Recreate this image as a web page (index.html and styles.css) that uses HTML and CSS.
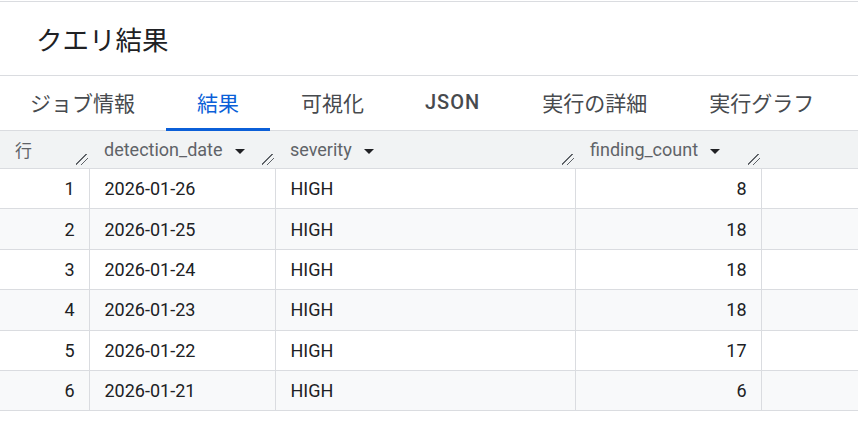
FILE: index.html
```html
<!DOCTYPE html>
<html lang="ja">
<head>
  <meta charset="UTF-8">
  <title>クエリ結果</title>
  <link rel="stylesheet" href="styles.css">
</head>
<body>
  <div class="title-bar">
    <h1 class="title">クエリ結果</h1>
  </div>

  <div class="tabs">
    <div class="tab">ジョブ情報</div>
    <div class="tab active">結果</div>
    <div class="tab">可視化</div>
    <div class="tab latin">JSON</div>
    <div class="tab">実行の詳細</div>
    <div class="tab">実行グラフ</div>
  </div>

  <table class="results">
    <colgroup>
      <col class="c-row">
      <col class="c-date">
      <col class="c-sev">
      <col class="c-count">
      <col>
    </colgroup>
    <thead>
      <tr>
        <th class="row-head">行<span class="handle"></span></th>
        <th><span class="col-name">detection_date</span><span class="drop"></span><span class="handle"></span></th>
        <th><span class="col-name">severity</span><span class="drop"></span><span class="handle"></span></th>
        <th><span class="col-name">finding_count</span><span class="drop"></span><span class="handle"></span></th>
        <th></th>
      </tr>
    </thead>
    <tbody>
      <tr><td class="num">1</td><td>2026-01-26</td><td>HIGH</td><td class="num">8</td><td class="spacer"></td></tr>
      <tr><td class="num">2</td><td>2026-01-25</td><td>HIGH</td><td class="num">18</td><td class="spacer"></td></tr>
      <tr><td class="num">3</td><td>2026-01-24</td><td>HIGH</td><td class="num">18</td><td class="spacer"></td></tr>
      <tr><td class="num">4</td><td>2026-01-23</td><td>HIGH</td><td class="num">18</td><td class="spacer"></td></tr>
      <tr><td class="num">5</td><td>2026-01-22</td><td>HIGH</td><td class="num">17</td><td class="spacer"></td></tr>
      <tr><td class="num">6</td><td>2026-01-21</td><td>HIGH</td><td class="num">6</td><td class="spacer"></td></tr>
    </tbody>
  </table>
</body>
</html>
```

FILE: styles.css
```css
:root {
  --line: #dadce0;
  --head-bg: #f1f3f4;
  --stripe: #f8f9fa;
  --text: #202124;
  --muted: #5f6368;
  --tab-text: #474a4e;
  --blue: #0b5fd8;
}

body {
  margin: 0;
  padding-top: 1px;
  background: #fff;
  color: var(--text);
  font-family: Roboto, "Noto Sans CJK JP", sans-serif;
}

.title-bar {
  border-top: 1px solid var(--line);
  border-bottom: 1px solid var(--line);
  height: 73px;
  display: flex;
  align-items: center;
  padding-left: 36px;
}

.title {
  margin: 0;
  font-size: 26.5px;
  font-weight: 400;
  font-family: "Noto Sans CJK JP", sans-serif;
}

.tabs {
  display: flex;
  height: 54px;
  border-bottom: 1px solid var(--line);
}

.tab {
  display: flex;
  align-items: center;
  padding: 0 31px;
  font-size: 21px;
  font-family: "Noto Sans CJK JP", sans-serif;
  font-weight: 400;
  color: var(--tab-text);
  border-bottom: 3px solid transparent;
  margin-bottom: -1px;
}

.tab:first-child {
  padding-left: 30px;
}

.tab.latin {
  font-family: Roboto, sans-serif;
  font-size: 20px;
  font-weight: 500;
  letter-spacing: 1px;
  padding: 0 31px 0 30px;
}

.tab.active {
  color: var(--blue);
  border-bottom-color: var(--blue);
}

.results {
  width: 100%;
  border-collapse: collapse;
  table-layout: fixed;
  font-size: 18px;
}

.c-row { width: 89px; }
.c-date { width: 186px; }
.c-sev { width: 300px; }
.c-count { width: 186px; }

.results th {
  position: relative;
  height: 37px;
  padding: 0 15px;
  background: var(--head-bg);
  border-bottom: 1px solid var(--line);
  color: var(--muted);
  font-weight: 400;
  text-align: left;
  white-space: nowrap;
}

.results th.row-head {
  font-family: "Noto Sans CJK JP", sans-serif;
  font-size: 17px;
}

.drop {
  display: inline-block;
  margin-left: 12px;
  vertical-align: middle;
  border-left: 5.5px solid transparent;
  border-right: 5.5px solid transparent;
  border-top: 5.5px solid #202124;
}

.handle {
  position: absolute;
  right: 1px;
  bottom: 3px;
  width: 12px;
  height: 11px;
  background:
    linear-gradient(135deg, transparent 44%, #5f6368 44%, #5f6368 53%, transparent 53%) 0 0 / 11px 11px no-repeat;
}

.handle::after {
  content: "";
  position: absolute;
  right: 0;
  bottom: 0;
  width: 7px;
  height: 7px;
  background: linear-gradient(135deg, transparent 43%, #5f6368 43%, #5f6368 57%, transparent 57%);
}

.results td {
  height: 39.4px;
  padding: 0 15px;
  border-bottom: 1px solid var(--line);
  border-right: 1px solid var(--line);
}

.results td.spacer {
  border-right: none;
}

.results td.num {
  text-align: right;
  padding-right: 14px;
}

.results tbody tr:nth-child(even) td {
  background: var(--stripe);
}
```
